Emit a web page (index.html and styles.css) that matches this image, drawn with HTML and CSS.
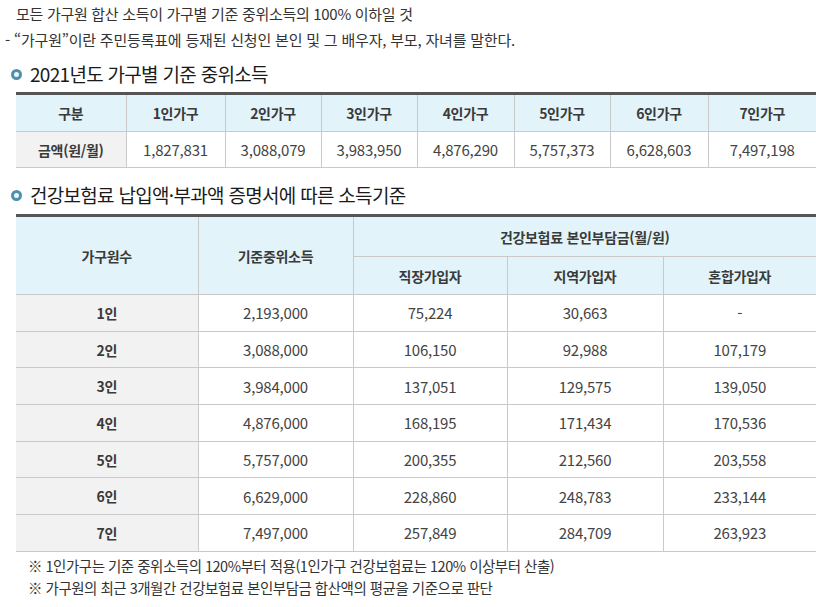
FILE: index.html
```html
<!DOCTYPE html>
<html lang="ko">
<head>
<meta charset="utf-8">
<link rel="stylesheet" href="styles.css">
</head>
<body>
<div class="page">
  <p class="line1">모든 가구원 합산 소득이 가구별 기준 중위소득의 100% 이하일 것</p>
  <p class="line2">- “가구원”이란 주민등록표에 등재된 신청인 본인 및 그 배우자, 부모, 자녀를 말한다.</p>

  <h2 class="title t1"><span class="dot"></span>2021년도 가구별 기준 중위소득</h2>
  <table class="tbl tbl1">
    <colgroup>
      <col style="width:110px"><col style="width:99px"><col style="width:96px"><col style="width:96px"><col style="width:97px"><col style="width:96px"><col style="width:98px"><col>
    </colgroup>
    <tr class="head">
      <th>구분</th><th>1인가구</th><th>2인가구</th><th>3인가구</th><th>4인가구</th><th>5인가구</th><th>6인가구</th><th>7인가구</th>
    </tr>
    <tr>
      <th class="side">금액(원/월)</th><td>1,827,831</td><td>3,088,079</td><td>3,983,950</td><td>4,876,290</td><td>5,757,373</td><td>6,628,603</td><td>7,497,198</td>
    </tr>
  </table>

  <h2 class="title t2"><span class="dot"></span>건강보험료 납입액·부과액 증명서에 따른 소득기준</h2>
  <table class="tbl tbl2">
    <colgroup>
      <col style="width:182px"><col style="width:155px"><col style="width:154px"><col style="width:156px"><col>
    </colgroup>
    <tr class="head h1">
      <th rowspan="2">가구원수</th><th rowspan="2">기준중위소득</th><th colspan="3">건강보험료 본인부담금(월/원)</th>
    </tr>
    <tr class="head h2">
      <th>직장가입자</th><th>지역가입자</th><th>혼합가입자</th>
    </tr>
    <tr><th class="side">1인</th><td>2,193,000</td><td>75,224</td><td>30,663</td><td>-</td></tr>
    <tr><th class="side">2인</th><td>3,088,000</td><td>106,150</td><td>92,988</td><td>107,179</td></tr>
    <tr><th class="side">3인</th><td>3,984,000</td><td>137,051</td><td>129,575</td><td>139,050</td></tr>
    <tr><th class="side">4인</th><td>4,876,000</td><td>168,195</td><td>171,434</td><td>170,536</td></tr>
    <tr><th class="side">5인</th><td>5,757,000</td><td>200,355</td><td>212,560</td><td>203,558</td></tr>
    <tr><th class="side">6인</th><td>6,629,000</td><td>228,860</td><td>248,783</td><td>233,144</td></tr>
    <tr><th class="side">7인</th><td>7,497,000</td><td>257,849</td><td>284,709</td><td>263,923</td></tr>
  </table>

  <p class="note n1">※ 1인가구는 기준 중위소득의 120%부터 적용(1인가구 건강보험료는 120% 이상부터 산출)</p>
  <p class="note n2">※ 가구원의 최근 3개월간 건강보험료 본인부담금 합산액의 평균을 기준으로 판단</p>
</div>
</body>
</html>
```

FILE: styles.css
```css
html, body {
  margin: 0;
  padding: 0;
  background: #fff;
}
body {
  font-family: "Noto Sans CJK KR", "Noto Sans", sans-serif;
  color: #333;
}
.page {
  width: 816px;
  overflow: hidden;
}
p {
  margin: 0;
}
.line1 {
  font-size: 15px;
  line-height: 20px;
  padding: 4px 0 0 16px;
  letter-spacing: -0.3px;
}
.line2 {
  font-size: 15px;
  line-height: 20px;
  padding: 6px 0 0 5px;
  letter-spacing: -0.2px;
}
.title {
  margin: 0;
  font-weight: normal;
  font-size: 19px;
  line-height: 24px;
  color: #1a1a1a;
  display: flex;
  align-items: center;
  letter-spacing: -0.7px;
}
.t1 {
  padding: 12px 0 0 11px;
}
.t2 {
  padding: 15px 0 0 11px;
}
.dot {
  width: 5px;
  height: 5px;
  border: 3px solid #4f8fab;
  border-radius: 50%;
  background: #eaf6fa;
  margin-right: 8px;
  flex: none;
}
.tbl {
  border-collapse: collapse;
  table-layout: fixed;
  margin-left: 16px;
  width: 800px;
  border-top: 3px solid #555;
}
.tbl1 {
  margin-top: 6px;
}
.tbl2 {
  margin-top: 7px;
}
.tbl th, .tbl td {
  border: 1px solid #c9c9c9;
  padding: 0;
  text-align: center;
  font-size: 15px;
}
.tbl tr > :first-child {
  border-left: none;
}
.tbl tr > :last-child {
  border-right: none;
}
.tbl th {
  font-weight: bold;
  color: #3a3a3a;
  font-size: 14px;
  letter-spacing: -0.3px;
}
.tbl td {
  color: #444;
  letter-spacing: -0.2px;
}
.head th {
  background: #e2f4f9;
}
.tbl .side {
  background: #f2f2f2;
}
.tbl1 tr.head {
  height: 38px;
}
.tbl1 tr:not(.head) {
  height: 36px;
}
.tbl2 tr.h1 {
  height: 41px;
}
.tbl2 tr.h2 {
  height: 38px;
}
.tbl2 tr:not(.head) {
  height: 36.7px;
}
.tbl2 .h1 th[colspan] {
  border-right: none;
}
.note {
  font-size: 14.5px;
  line-height: 20px;
  padding-left: 28px;
  letter-spacing: -0.5px;
  color: #333;
}
.n1 {
  padding-top: 4px;
}
.n2 {
  padding-top: 2px;
}
```
